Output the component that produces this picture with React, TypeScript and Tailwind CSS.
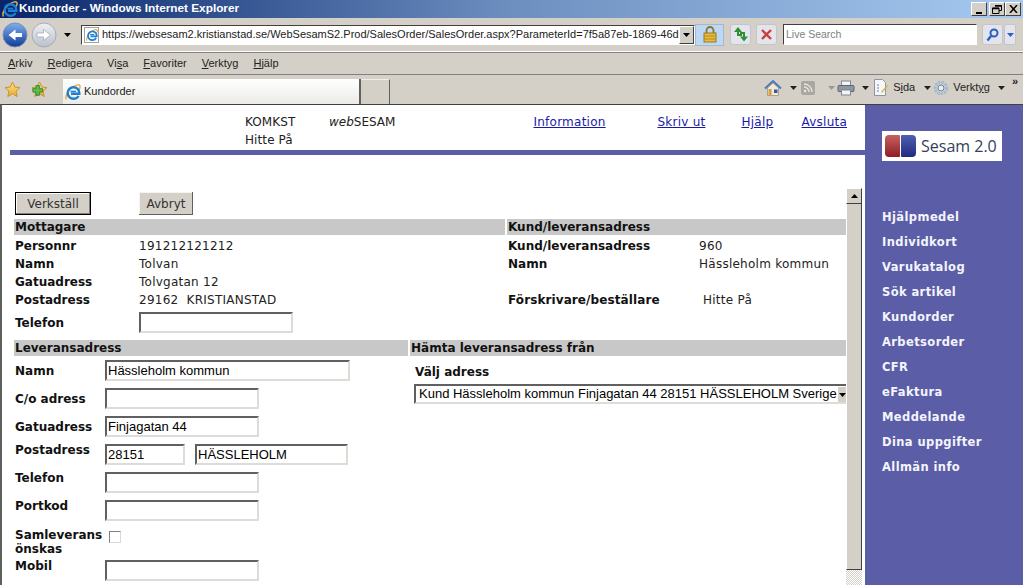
import React from 'react';

const ui = 'font-["Liberation_Sans",Arial,sans-serif]';

function IeLogo({ size = 16 }: { size?: number }) {
    return (
        <svg width={size} height={size} viewBox="0 0 16 16">
            <path d="M1.500 15.500C-.5 13 3 6.500 7 3.500s7.500-3.500 8-1.500c.3 1.200-.5 2.800-1.200 3.800" fill="none" stroke="#e3b04a" strokeWidth="1.500" />
            <path d="M13.500 12c-1 1.800-2.800 2.800-5 2.800a5.800 5.800 0 1 1 5.800-5.800v.8H6" fill="none" stroke="#1f7fd0" strokeWidth="2.400" />
            <path d="M5.500 7.500h5.600" stroke="#1f7fd0" strokeWidth="1.600" />
        </svg>
    );
}

function Caret({ color = '#000' }: { color?: string }) {
    return (
        <svg width="7" height="4" viewBox="0 0 7 4" className="shrink-0">
            <path d="M0 0h7L3.500 4z" fill={color} />
        </svg>
    );
}

function WinBtn({ children }: { children: React.ReactNode }) {
    return (
        <div className="flex h-[14px] w-4 items-center justify-center border border-[#fff_#404040_#404040_#fff] bg-[#d4d0c8]">
            {children}
        </div>
    );
}

function TitleBar() {
    return (
        <div className="flex h-[18px] items-center bg-gradient-to-r from-[#0a246a] via-[#6d8fc0] to-[#a6caf0] pl-[2px] pr-[2px]">
            <IeLogo />
            <span className={`${ui} ml-[1px] text-[11.800px] font-bold text-white`}>Kundorder - Windows Internet Explorer</span>
            <div className="ml-auto flex">
                <WinBtn>
                    <span className="mt-[7px] h-[2px] w-[6px] bg-black" />
                </WinBtn>
                <div className="w-[2px]" />
                <WinBtn>
                    <svg width="10" height="9" viewBox="0 0 10 9">
                        <path d="M3 .5h6.500v5H7M.5 3h6.500v5.500H.5z" fill="none" stroke="#000" />
                        <path d="M3 1h6.500M.5 3.500h6.500" stroke="#000" strokeWidth="1.500" />
                    </svg>
                </WinBtn>
                <WinBtn>
                    <svg width="9" height="8" viewBox="0 0 9 8">
                        <path d="M1 0l7 8M8 0L1 8" stroke="#000" strokeWidth="1.500" />
                    </svg>
                </WinBtn>
            </div>
        </div>
    );
}

function NavArrow({ back }: { back?: boolean }) {
    return (
        <svg width="26" height="26" viewBox="0 0 26 26">
            <defs>
                <linearGradient id={back ? 'navb' : 'navf'} x1="0" y1="0" x2="0" y2="1">
                    <stop offset="0" stopColor={back ? '#7fb0ee' : '#eef0f4'} />
                    <stop offset="1" stopColor={back ? '#0f3a98' : '#b9c0cc'} />
                </linearGradient>
            </defs>
            <circle cx="13" cy="13" r="12" fill={`url(#${back ? 'navb' : 'navf'})`} stroke={back ? '#7f8ea8' : '#a6abb5'} />
            <path
                d={back ? 'M20 11h-6.500V7.500L6.500 13l7 5.500V15H20z' : 'M6 11h6.500V7.500l7 5.500-7 5.500V15H6z'}
                fill="#fff"
                stroke={back ? 'none' : '#9aa3b2'}
                strokeWidth="0.700"
            />
        </svg>
    );
}

function AddressRow() {
    return (
        <div className="flex h-[34px] items-center border-b border-b-[#fff] bg-[#d4d0c8] pl-[2px]">
            <NavArrow back />
            <div className="w-[3px]" />
            <NavArrow />
            <div className="ml-[7px] mr-[10px]">
                <Caret />
            </div>
            <div className="flex h-[20px] w-[614px] items-center border border-[#404040_#fff_#fff_#404040] bg-white">
                <div className="ml-[2px] flex h-[16px] w-[15px] items-center justify-center border border-[#a0a0a0]">
                    <IeLogo size={12} />
                </div>
                <span className={`${ui} ml-[3px] flex-1 overflow-hidden whitespace-nowrap text-[11px] text-[#222]`}>
                    https://websesam2.kristianstad.se/WebSesamS2.Prod/SalesOrder/SalesOrder.aspx?ParameterId=7f5a87eb-1869-46dc
                </span>
                <div className="flex h-[18px] w-[15px] items-center justify-center border border-[#fff_#404040_#404040_#fff] bg-[#d4d0c8]">
                    <Caret />
                </div>
            </div>
            <div className="flex h-[22px] w-[29px] items-center justify-center border border-[#a8b8cc] bg-[#bcd8f4]">
                <svg width="14" height="17" viewBox="0 0 14 17">
                    <path d="M3.500 8V4.500a3.500 3.500 0 0 1 7 0V8" fill="none" stroke="#8a7430" strokeWidth="1.800" />
                    <rect x="1" y="7" width="12" height="9" fill="#e8b93a" stroke="#9a7a20" />
                    <path d="M1 10h12M1 13h12" stroke="#b58d24" />
                </svg>
            </div>
            <div className="ml-[6px] flex h-[21px] w-[21px] items-center justify-center rounded-[3px] border border-[#c4c4cc] bg-[#e4e4ec]">
                <svg width="16" height="15" viewBox="0 0 16 15">
                    <path d="M5 4v4h4" fill="none" stroke="#2f8f35" strokeWidth="2" />
                    <path d="M5 0L1 5h8z" fill="#2f8f35" />
                    <path d="M11 10V6H7" fill="none" stroke="#2f8f35" strokeWidth="2" />
                    <path d="M11 14.500L7 9.500h8z" fill="#2f8f35" />
                </svg>
            </div>
            <div className="ml-[5px] flex h-[21px] w-[21px] items-center justify-center rounded-[3px] border border-[#c4c4cc] bg-[#e4e4ec]">
                <svg width="11" height="11" viewBox="0 0 11 11">
                    <path d="M1 1l9 9M10 1l-9 9" stroke="#c8403c" strokeWidth="2.400" />
                </svg>
            </div>
            <div className="ml-[6px] flex h-[21px] w-[194px] items-center border border-[#404040_#fff_#fff_#404040] bg-white pl-[2px]">
                <span className={`${ui} text-[10.500px] text-[#808080]`}>Live Search</span>
            </div>
            <div className="ml-[5px] flex h-[21px] w-[21px] items-center justify-center rounded-[3px] border border-[#c4c4cc] bg-[#e4e4ec]">
                <svg width="13" height="14" viewBox="0 0 13 14">
                    <circle cx="8" cy="5" r="3.500" fill="none" stroke="#2a5fc4" strokeWidth="2" />
                    <path d="M5 8l-3.500 4.500" stroke="#2a5fc4" strokeWidth="2.400" />
                </svg>
            </div>
            <div className="ml-[1px] flex h-[21px] w-[12px] items-center justify-center rounded-[2px] border border-[#c4c4cc] bg-[#e4e4ec]">
                <Caret color="#2a5fc4" />
            </div>
        </div>
    );
}

function MenuBar() {
    const items: [string, string, string][] = [
        ['', 'A', 'rkiv'],
        ['', 'R', 'edigera'],
        ['Vi', 's', 'a'],
        ['', 'F', 'avoriter'],
        ['', 'V', 'erktyg'],
        ['', 'H', 'jälp'],
    ];
    return (
        <div className="flex h-[23px] items-center gap-[15px] border-b border-b-[#808080] border-t border-t-[#808080] bg-[#d4d0c8] pl-[8px]">
            {items.map(([a, b, c]) => (
                <span key={a + b + c} className={`${ui} text-[11px] text-[#222]`}>
                    {a}
                    <span className="underline">{b}</span>
                    {c}
                </span>
            ))}
        </div>
    );
}

function Star({ add }: { add?: boolean }) {
    return (
        <svg width="17" height="17" viewBox="0 0 17 17">
            <defs>
                <linearGradient id={add ? 'stara' : 'starb'} x1="0" y1="0" x2="0" y2="1">
                    <stop offset="0" stopColor="#fbe38a" />
                    <stop offset="1" stopColor="#ecaa2e" />
                </linearGradient>
            </defs>
            <path
                d="M8.500 1l2.300 5 5.200.6-3.900 3.500 1.100 5.400-4.700-2.700-4.700 2.700 1.100-5.400L1 6.600l5.200-.6z"
                fill={`url(#${add ? 'stara' : 'starb'})`}
                stroke="#c4962c"
            />
            {add && <path d="M5 4.500v3.200H1.800v3.400H5v3.200h3.400v-3.200h3.200V7.700H8.400V4.500z" fill="#5cbc4c" stroke="#2f7a2a" strokeWidth="0.800" />}
        </svg>
    );
}

function CommandBar() {
    return (
        <div className="flex h-[29px] items-end bg-[#d4d0c8] pl-[4px]">
            <div className="mb-[6px] flex gap-[10px]">
                <Star />
                <Star add />
            </div>
            <div className="ml-[15px] flex h-[25px] w-[298px] items-center border-r-2 border-r-[#606060] bg-gradient-to-b from-white to-[#ecebe6] pl-[2px]">
                <IeLogo />
                <span className={`${ui} ml-[3px] text-[11px] text-[#222]`}>Kundorder</span>
            </div>
            <div className="h-[25px] w-[29px] border-r border-r-[#606060] border-t border-t-[#f0eee8] bg-[#d4d0c8]" />
            <div className="mb-[5px] ml-auto flex items-center pr-[5px]">
                <svg width="18" height="18" viewBox="0 0 18 18">
                    <path d="M3.500 9v7.500h11V9L9 4z" fill="#f0e8d8" stroke="#8a7a60" strokeWidth="0.600" />
                    <path d="M1 9.500l8-7.500 8 7.500" fill="none" stroke="#4a78b8" strokeWidth="2" />
                    <path d="M4.500 10h3v6.500h-3z" fill="#d99a4a" />
                    <rect x="10" y="10.500" width="3.500" height="3.500" fill="#2f5f9f" />
                </svg>
                <div className="ml-[8px]">
                    <Caret color="#222" />
                </div>
                <div className="ml-[4px] flex h-[14px] w-[14px] items-center justify-center rounded-[2px] bg-[#a8a8a0]">
                    <svg width="10" height="10" viewBox="0 0 10 10">
                        <circle cx="2" cy="8" r="1.300" fill="#e8e8e0" />
                        <path d="M1 4a5 5 0 0 1 5 5M1 1a8 8 0 0 1 8 8" fill="none" stroke="#e8e8e0" strokeWidth="1.300" />
                    </svg>
                </div>
                <div className="ml-[13px]">
                    <Caret color="#9a9a94" />
                </div>
                <div className="ml-[2px]">
                    <svg width="18" height="16" viewBox="0 0 18 16">
                        <rect x="4.500" y="1" width="9" height="5" fill="#f4f4f4" stroke="#808890" />
                        <rect x="1" y="5.500" width="16" height="6" rx="1" fill="#8f98a2" stroke="#5d6670" />
                        <rect x="4.500" y="10" width="9" height="5" fill="#f4f4f4" stroke="#808890" />
                    </svg>
                </div>
                <div className="ml-[7px]">
                    <Caret color="#222" />
                </div>
                <div className="ml-[4px]">
                    <svg width="16" height="17" viewBox="0 0 16 17">
                        <path d="M1.500.5h8l3 3v13h-11z" fill="#f6f6f4" stroke="#8a95a5" />
                        <path d="M4 6h2M4 9h2M4 12h2" stroke="#5b87bd" />
                        <path d="M8 13l6-7 1 1-6 7z" fill="#d8b24a" />
                    </svg>
                </div>
                <span className={`${ui} ml-[4px] text-[11px] text-[#222]`}>
                    S<span className="underline">i</span>da
                </span>
                <div className="ml-[9px]">
                    <Caret color="#222" />
                </div>
                <div className="ml-[2px]">
                    <svg width="16" height="16" viewBox="0 0 16 16">
                        <circle cx="8" cy="8" r="5.800" fill="none" stroke="#a3bad2" strokeWidth="3" strokeDasharray="2.400 1" />
                        <circle cx="8" cy="8" r="3" fill="#e8ecf2" stroke="#6f8298" />
                    </svg>
                </div>
                <span className={`${ui} ml-[4px] text-[11px] text-[#222]`}>
                    Verkt<span className="underline">y</span>g
                </span>
                <div className="ml-[8px]">
                    <Caret color="#222" />
                </div>
                <span className={`${ui} mb-[12px] ml-[7px] text-[11px] leading-[11px] font-bold text-[#222]`}>»</span>
            </div>
        </div>
    );
}

const page = 'font-["DejaVu_Sans",Verdana,sans-serif] text-[12px] leading-[18px] text-black';
const label = 'font-bold text-[#111]';
const value = 'whitespace-nowrap tracking-[0.25px] text-[#222]';
const field = 'h-[21px] border-2 border-[#606060_#dedcd6_#dedcd6_#606060] bg-white pl-[1px] font-["Liberation_Sans",Arial,sans-serif] text-[13px] text-black outline-none';

function SectionBar({ children, className }: { children: React.ReactNode; className: string }) {
    return <div className={`h-[16px] bg-[#c8c8c8] pl-[1px] text-[12px] leading-[17px] font-bold text-[#111] ${className}`}>{children}</div>;
}

function Field({ width, val }: { width: string; val?: string }) {
    return <input readOnly value={val ?? ''} className={`${field} ${width}`} />;
}

function Row({ name, children, className }: { name: React.ReactNode; children: React.ReactNode; className?: string }) {
    return (
        <div className={`flex ${className ?? 'h-[28px] items-start'}`}>
            <div className={`${label} w-[91px] shrink-0 pl-[1px]`}>{name}</div>
            {children}
        </div>
    );
}

function Form() {
    return (
        <div className="min-w-0 flex-1">
            <div className="flex h-[23px] items-start gap-[48px] pl-[1px]">
                <button className="h-[23px] w-[76px] border border-[#000] bg-[#d4d0c8] text-[12px] text-[#333] shadow-[inset_-1px_-1px_0_#808080,inset_1px_1px_0_#fff]">
                    Verkställ
                </button>
                <button className="h-[23px] w-[54px] bg-[#d4d0c8] text-[12px] text-[#333] shadow-[inset_-1px_-1px_0_#606060,inset_1px_1px_0_#f4f4f0]">
                    Avbryt
                </button>
            </div>

            <div className="mt-[4px] flex gap-[2px]">
                <SectionBar className="w-[491px]">Mottagare</SectionBar>
                <SectionBar className="flex-1">Kund/leveransadress</SectionBar>
            </div>

            <div className="mt-[2px] flex">
                <div className="w-[493px] shrink-0 pl-[1px]">
                    {[
                        ['Personnr', '191212121212'],
                        ['Namn', 'Tolvan'],
                        ['Gatuadress', 'Tolvgatan 12'],
                        ['Postadress', '29162\u00a0 KRISTIANSTAD'],
                    ].map(([k, v]) => (
                        <div key={k} className="flex h-[18px]">
                            <div className={`${label} w-[124px] shrink-0`}>{k}</div>
                            <div className={value}>{v}</div>
                        </div>
                    ))}
                    <div className="mt-[3px] flex h-[21px] items-center">
                        <div className={`${label} w-[124px] shrink-0`}>Telefon</div>
                        <Field width="w-[154px]" />
                    </div>
                </div>
                <div className="flex-1 pl-[1px]">
                    <div className="flex h-[18px]">
                        <div className={`${label} w-[191px] shrink-0`}>Kund/leveransadress</div>
                        <div className={value}>960</div>
                    </div>
                    <div className="flex h-[18px]">
                        <div className={`${label} w-[191px] shrink-0`}>Namn</div>
                        <div className={value}>Hässleholm kommun</div>
                    </div>
                    <div className="mt-[18px] flex h-[18px]">
                        <div className={`${label} w-[195px] shrink-0 tracking-[0.1px]`}>Förskrivare/beställare</div>
                        <div className={value}>Hitte På</div>
                    </div>
                </div>
            </div>

            <div className="mt-[7px] flex gap-[2px]">
                <SectionBar className="w-[394px]">Leveransadress</SectionBar>
                <SectionBar className="flex-1">Hämta leveransadress från</SectionBar>
            </div>

            <div className="flex">
                <div className="mt-[4px] w-[396px] shrink-0">
                    <Row name={<span className="relative top-[2px]">Namn</span>}>
                        <Field width="w-[245px]" val="Hässleholm kommun" />
                    </Row>
                    <Row name={<span className="relative top-[2px]">C/o adress</span>}>
                        <Field width="w-[154px]" />
                    </Row>
                    <Row name={<span className="relative top-[2px]">Gatuadress</span>}>
                        <Field width="w-[154px]" val="Finjagatan 44" />
                    </Row>
                    <Row name={<span className="relative top-[-3px]">Postadress</span>}>
                        <Field width="w-[80px]" val="28151" />
                        <div className="w-[10px]" />
                        <Field width="w-[153px]" val="HÄSSLEHOLM" />
                    </Row>
                    <Row name={<span className="relative top-[-3px]">Telefon</span>}>
                        <Field width="w-[154px]" />
                    </Row>
                    <Row name={<span className="relative top-[-3px]">Portkod</span>}>
                        <Field width="w-[154px]" />
                    </Row>
                    <Row
                        className="h-[32px] items-start"
                        name={<span className="block w-[90px] leading-[14px]">Samleverans önskas</span>}
                    >
                        <div className="ml-[4px] mt-[3px] h-[12px] w-[12px] border border-[#808080_#d8d8d8_#d8d8d8_#808080] bg-white" />
                    </Row>
                    <Row name={<span className="relative top-[-3px]">Mobil</span>}>
                        <Field width="w-[154px]" />
                    </Row>
                </div>
                <div className="min-w-0 flex-1 pl-[5px]">
                    <div className={`${label} mt-[7px] h-[18px]`}>Välj adress</div>
                    <div className="mt-[3px] -ml-[1px] flex h-[20px] items-center overflow-hidden border-2 border-r-0 border-[#606060_#dedcd6_#dedcd6_#606060] bg-white pl-[3px]">
                        <span className='flex-1 whitespace-nowrap font-["Liberation_Sans",Arial,sans-serif] text-[13px] text-black'>
                            Kund Hässleholm kommun Finjagatan 44 28151 HÄSSLEHOLM Sverige
                        </span>
                        <div className="flex h-[16px] w-[9px] shrink-0 items-center justify-center overflow-hidden border-l border-t border-[#fff] bg-[#d4d0c8]">
                            <Caret />
                        </div>
                    </div>
                </div>
            </div>
        </div>
    );
}

function Scrollbar() {
    return (
        <div className="flex w-[16px] shrink-0 flex-col bg-[#d4d0c8]">
            <div className="flex h-[16px] items-center justify-center border border-[#fff_#404040_#404040_#fff] bg-[#d4d0c8]">
                <svg width="7" height="4" viewBox="0 0 7 4">
                    <path d="M3.500 0L7 4H0z" fill="#000" />
                </svg>
            </div>
            <div className="flex-1 border-r border-r-[#404040] border-b border-b-[#404040] border-l border-l-white" />
            <div className="h-[15px] bg-[repeating-conic-gradient(#d4d0c8_0_25%,#fff_0_50%)] bg-[length:2px_2px]" />
        </div>
    );
}

function SesamLogo() {
    return (
        <div className="flex h-[30px] w-[120px] items-center bg-white pl-[3px]">
            <div className="h-[22px] w-[15px] rounded-l-[4px] rounded-r-[1px] bg-gradient-to-b from-[#c86060] to-[#8c1c24]" />
            <div className="ml-[1px] h-[22px] w-[15px] rounded-l-[1px] rounded-r-[4px] bg-gradient-to-b from-[#5060b0] to-[#222a80]" />
            <span className='ml-[5px] font-["Open_Sans",sans-serif] text-[16px] leading-none text-[#33415c]'>Sesam 2.0</span>
        </div>
    );
}

function Sidebar() {
    const links = ['Hjälpmedel', 'Individkort', 'Varukatalog', 'Sök artikel', 'Kundorder', 'Arbetsorder', 'CFR', 'eFaktura', 'Meddelande', 'Dina uppgifter', 'Allmän info'];
    return (
        <div className="w-[158px] shrink-0 bg-[#5b5ea6] pl-[17px] pt-[26px]">
            <SesamLogo />
            <div className="mt-[47px] flex flex-col">
                {links.map((l) => (
                    <div key={l} className="h-[25px] text-[11.500px] leading-[18px] font-bold tracking-[0.4px] text-[#f4f4fc]">
                        {l}
                    </div>
                ))}
            </div>
        </div>
    );
}

function Header() {
    return (
        <div className="h-[45px]">
            <div className="flex pt-[8px] text-[#222]">
                <div className="ml-[243px] w-[84px] tracking-[0.1px]">
                    <div>KOMKST</div>
                    <div>Hitte På</div>
                </div>
                <div>
                    <i>web</i>SESAM
                </div>
                <div className="ml-[138px] flex tracking-[0.25px] text-[#1a1aa8] underline">
                    <span className="w-[124px]">Information</span>
                    <span className="w-[84px]">Skriv ut</span>
                    <span className="w-[60px]">Hjälp</span>
                    <span>Avsluta</span>
                </div>
            </div>
        </div>
    );
}

export default function App() {
    return (
        <div className="flex h-[585px] w-[1023px] flex-col overflow-hidden bg-[#d4d0c8]">
            <TitleBar />
            <AddressRow />
            <MenuBar />
            <CommandBar />
            <div className={`flex min-h-0 flex-1 border-t border-t-[#404040] border-l-2 border-l-[#606060] bg-white ${page}`}>
                <div className="flex min-w-0 flex-1 flex-col">
                    <Header />
                    <div className="ml-[8px] h-[5px] bg-[#5b5ea6]" />
                    <div className="mt-[33px] ml-[12px] flex min-h-0 flex-1 pr-[3px]">
                        <div className="flex min-w-0 flex-1 flex-col pt-[4px]">
                            <Form />
                        </div>
                        <Scrollbar />
                    </div>
                </div>
                <Sidebar />
            </div>
        </div>
    );
}
